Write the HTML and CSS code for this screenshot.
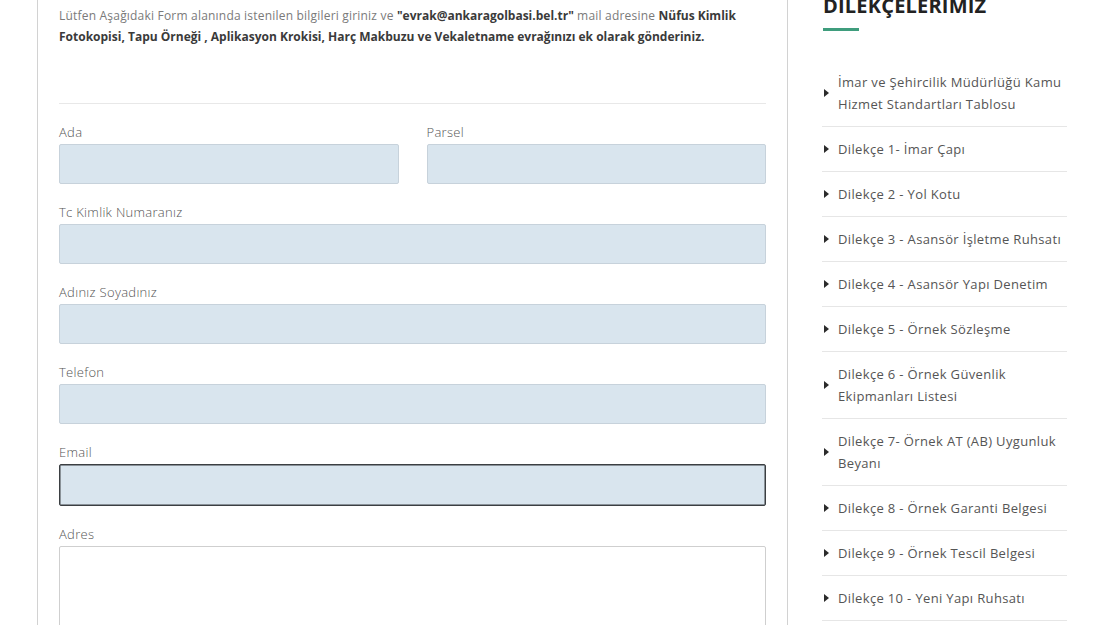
FILE: index.html
```html
<!DOCTYPE html>
<html lang="tr">
<head>
<meta charset="utf-8">
<title>Dilekçe Formu</title>
<link rel="stylesheet" href="styles.css">
</head>
<body>
<div class="page">
  <main class="panel">
    <p class="intro">Lütfen Aşağıdaki Form alanında istenilen bilgileri giriniz ve <b>"evrak@ankaragolbasi.bel.tr"</b> mail adresine <b>Nüfus Kimlik Fotokopisi, Tapu Örneği , Aplikasyon Krokisi, Harç Makbuzu ve Vekaletname evrağınızı ek olarak gönderiniz.</b></p>
    <div class="divider"></div>
    <form class="form">
      <div class="row">
        <div class="field">
          <label class="label">Ada</label>
          <input class="input" type="text">
        </div>
        <div class="field">
          <label class="label">Parsel</label>
          <input class="input" type="text">
        </div>
      </div>
      <div class="field">
        <label class="label">Tc Kimlik Numaranız</label>
        <input class="input" type="text">
      </div>
      <div class="field">
        <label class="label">Adınız Soyadınız</label>
        <input class="input" type="text">
      </div>
      <div class="field">
        <label class="label">Telefon</label>
        <input class="input" type="text">
      </div>
      <div class="field">
        <label class="label">Email</label>
        <input class="input input-focus" type="text">
      </div>
      <div class="field">
        <label class="label">Adres</label>
        <textarea class="textarea"></textarea>
      </div>
    </form>
  </main>
  <aside class="sidebar">
    <h2 class="side-title">DİLEKÇELERİMİZ</h2>
    <div class="side-bar-line"></div>
    <ul class="side-list">
      <li class="side-item"><span class="arrow"></span><span class="side-text">İmar ve Şehircilik Müdürlüğü Kamu Hizmet Standartları Tablosu</span></li>
      <li class="side-item"><span class="arrow"></span><span class="side-text">Dilekçe 1- İmar Çapı</span></li>
      <li class="side-item"><span class="arrow"></span><span class="side-text">Dilekçe 2 - Yol Kotu</span></li>
      <li class="side-item"><span class="arrow"></span><span class="side-text">Dilekçe 3 - Asansör İşletme Ruhsatı</span></li>
      <li class="side-item"><span class="arrow"></span><span class="side-text">Dilekçe 4 - Asansör Yapı Denetim</span></li>
      <li class="side-item"><span class="arrow"></span><span class="side-text">Dilekçe 5 - Örnek Sözleşme</span></li>
      <li class="side-item"><span class="arrow"></span><span class="side-text">Dilekçe 6 - Örnek Güvenlik Ekipmanları Listesi</span></li>
      <li class="side-item"><span class="arrow"></span><span class="side-text">Dilekçe 7- Örnek AT (AB) Uygunluk Beyanı</span></li>
      <li class="side-item"><span class="arrow"></span><span class="side-text">Dilekçe 8 - Örnek Garanti Belgesi</span></li>
      <li class="side-item"><span class="arrow"></span><span class="side-text">Dilekçe 9 - Örnek Tescil Belgesi</span></li>
      <li class="side-item"><span class="arrow"></span><span class="side-text">Dilekçe 10 - Yeni Yapı Ruhsatı</span></li>
    </ul>
  </aside>
</div>
</body>
</html>
```

FILE: styles.css
```css
* { box-sizing: border-box; }
html, body { margin: 0; padding: 0; background: #fff; overflow: hidden; }
body { font-family: "Open Sans", "Noto Sans", sans-serif; color: #555; }

.page {
  display: flex;
  align-items: flex-start;
  padding-left: 37px;
  gap: 34px;
}

.panel {
  width: 751px;
  flex: none;
  border-left: 1px solid #d2d2d2;
  border-right: 1px solid #d2d2d2;
  padding: 5px 21px 40px;
  min-height: 700px;
}

.intro {
  margin: 0;
  font-size: 12px;
  line-height: 21px;
  color: #7a7a7a;
  letter-spacing: 0.2px;
}
.intro b { font-weight: 700; color: #3a3a3a; letter-spacing: 0; }

.divider {
  margin-top: 56px;
  height: 1px;
  background: #e8e8e8;
}

.form { margin-top: 19px; }

.row {
  display: grid;
  grid-template-columns: 1fr 1fr;
  column-gap: 28px;
}

.field { margin-bottom: 19px; }

.label {
  display: block;
  font-size: 13px;
  line-height: 18px;
  margin-bottom: 3px;
  color: #555;
  font-weight: 300;
  letter-spacing: 0.3px;
}

.input {
  display: block;
  width: 100%;
  height: 40px;
  margin: 0;
  background: #d9e5ee;
  border: 1px solid #c7d2db;
  border-radius: 2px;
  font: inherit;
}
.input-focus {
  height: 42px;
  border: 1px solid #3b3f42;
  box-shadow: inset 0 0 0 0.5px #3b3f42;
}

.textarea {
  display: block;
  width: 100%;
  height: 130px;
  margin: 0;
  background: #fff;
  border: 1px solid #cfcfcf;
  border-radius: 2px;
  resize: none;
  font: inherit;
}

.sidebar {
  width: 245px;
  flex: none;
}

.side-title {
  margin: -6px 0 0 1px;
  font-size: 20px;
  line-height: 24px;
  font-weight: 700;
  color: #222;
  letter-spacing: 0.2px;
}

.side-bar-line {
  margin: 10px 0 0 1px;
  width: 36px;
  height: 3px;
  background: #3f9d7d;
}

.side-list {
  list-style: none;
  margin: 29px 0 0;
  padding: 0;
}

.side-item {
  display: flex;
  align-items: center;
  padding: 11px 0;
  border-bottom: 1px solid #e6e6e6;
  font-size: 13px;
  line-height: 22px;
  color: #555;
  letter-spacing: 0.35px;
}

.arrow {
  flex: none;
  width: 0;
  height: 0;
  margin: 0 9px 0 2px;
  border-left: 5px solid #2b2b2b;
  border-top: 4px solid transparent;
  border-bottom: 4px solid transparent;
}

.side-text { flex: 1; }
```
